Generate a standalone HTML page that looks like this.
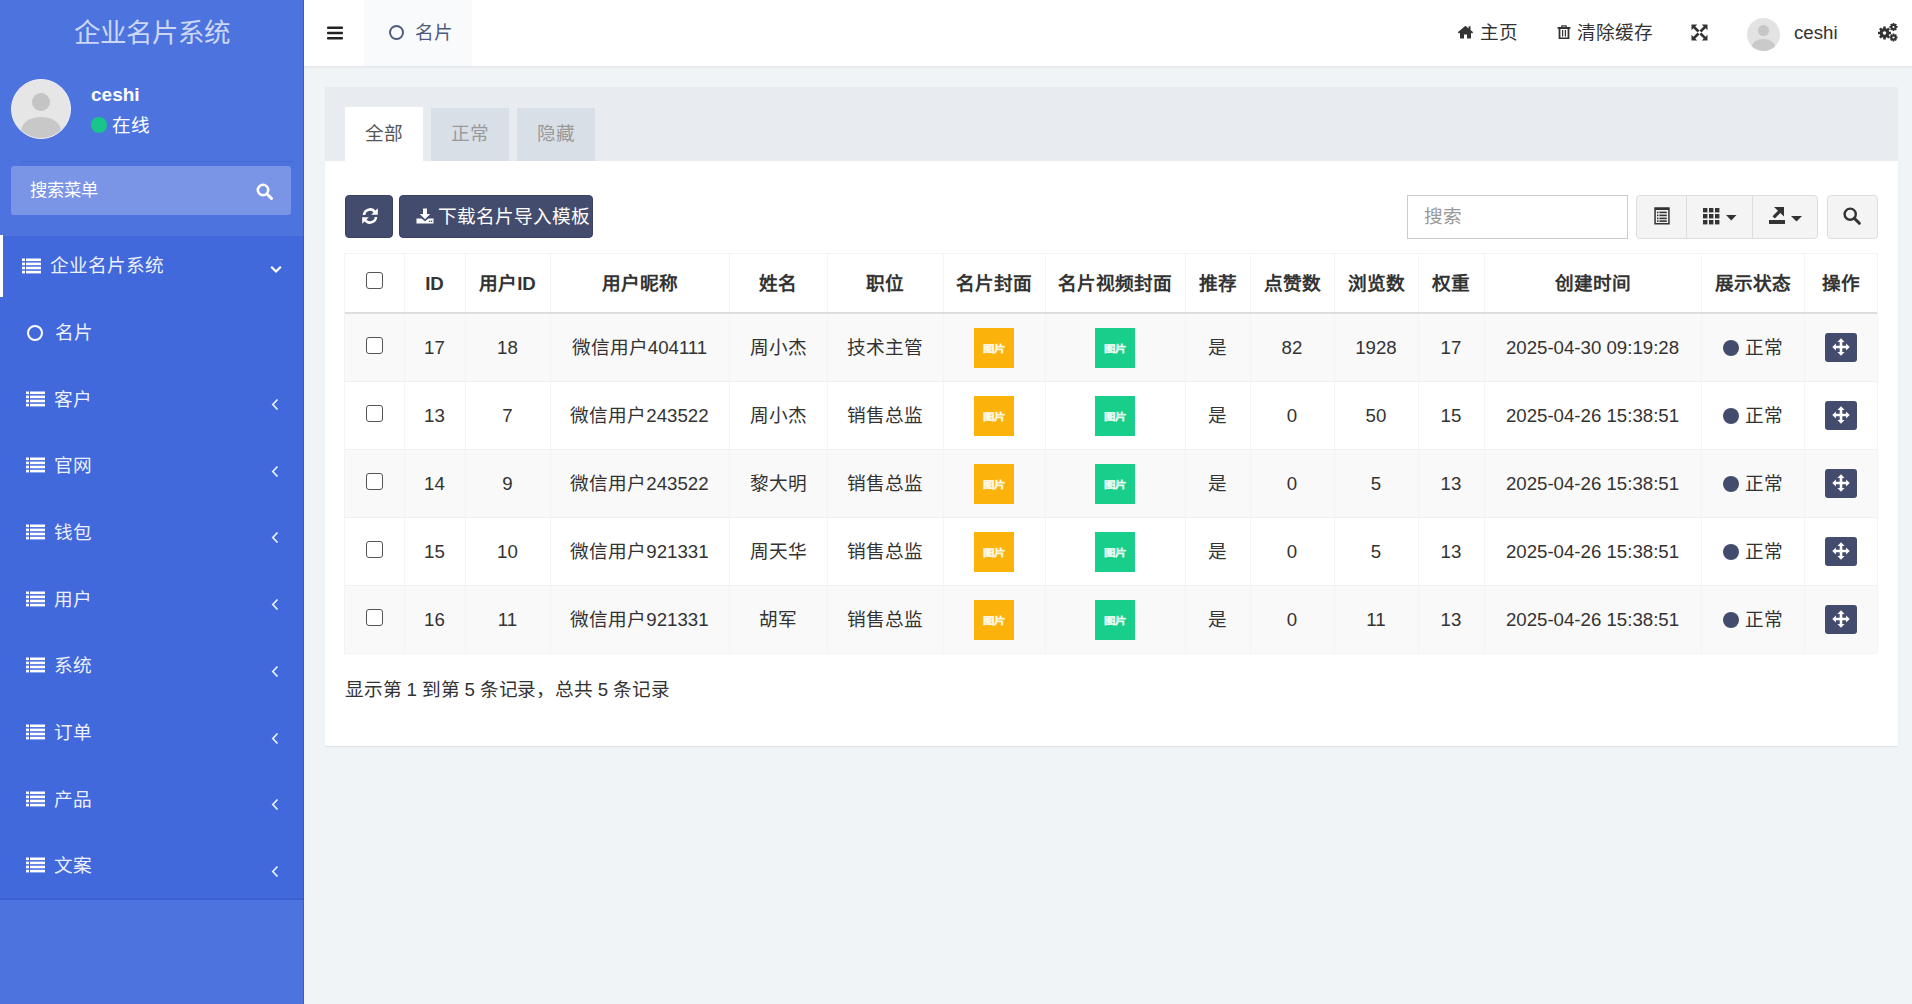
<!DOCTYPE html>
<html lang="zh-CN"><head><meta charset="utf-8">
<style>
*{box-sizing:border-box;margin:0;padding:0}
html,body{width:1912px;height:1004px;overflow:hidden}
body{font-family:"Liberation Sans",sans-serif;font-size:18.67px;color:#333;background:#f1f4f6;position:relative}
.abs{position:absolute}
svg{display:block}
/* sidebar */
#sb{left:0;top:0;width:304px;height:1004px;background:#4d74de}
#logo{left:0;top:0;width:304px;height:66px;text-align:center;line-height:66px;font-size:26.5px;color:rgba(255,255,255,.72)}
#menu{left:0;top:236px;width:304px;height:664px;background:#4269dc}
.mi{position:absolute;left:0;width:304px;height:66px;color:#fff}
.mi .t{position:absolute;left:54px;top:0;line-height:66px;font-size:18.67px}
/* header */
#hd{left:304px;top:0;width:1608px;height:66px;background:#fff}
/* content */
#panel{left:325px;top:87px;width:1573px;height:659px;background:#fff;box-shadow:0 1px 1px rgba(0,0,0,.05)}
#ph{left:0;top:0;width:1573px;height:74px;background:#e8ecf0}
.tab{position:absolute;top:20px;height:54px;width:78px;text-align:center;line-height:54px;font-size:18.67px}
.btn{position:absolute;border-radius:4px}
table{border-collapse:collapse;table-layout:fixed;position:absolute;left:345px;top:253px;width:1532px}
td,th{line-height:26px;padding-top:2px;text-align:center;vertical-align:middle;border-left:1px solid #f4f4f4;font-size:18.67px;color:#333;white-space:nowrap;overflow:hidden}
th{height:60px;font-weight:bold;border-bottom:2px solid #ddd}
td{height:68px;border-bottom:1px solid #f0f0f0}
tbody tr:nth-child(odd) td{background:#f9f9f9}
.cb{display:inline-block;width:17px;height:17px;border:1.3px solid #555;border-radius:3px;background:#fff;vertical-align:middle;position:relative;top:-4px}
.img{display:inline-block;width:40px;height:40px;vertical-align:middle}
.dot{display:inline-block;width:16px;height:16px;border-radius:50%;background:#444c6e;vertical-align:middle;margin-right:6px;position:relative;top:-1px}
.mv{display:inline-flex;align-items:center;justify-content:center;width:32px;height:29px;border-radius:3px;background:#444c6e;vertical-align:middle;position:relative;top:-1px}
</style></head><body>


<!-- SIDEBAR -->
<div id="sb" class="abs"></div>
<div id="logo" class="abs">企业名片系统</div>
<div class="abs" style="left:11px;top:79px;width:60px;height:60px;border-radius:50%;background:#e6e6e6;overflow:hidden;border:1.5px solid #eef">
 <div class="abs" style="left:20px;top:13px;width:18px;height:18px;border-radius:50%;background:#c4c4c4"></div>
 <div class="abs" style="left:9px;top:37px;width:40px;height:28px;border-radius:50%;background:#c8c8c8"></div>
</div>
<div class="abs" style="left:91px;top:83px;font-size:19px;font-weight:bold;color:#fff;line-height:24px">ceshi</div>
<div class="abs" style="left:91px;top:117px;width:16px;height:16px;border-radius:50%;background:#18c58b"></div>
<div class="abs" style="left:112px;top:113px;font-size:18.67px;color:#fff;line-height:26px">在线</div>
<div class="abs" style="left:22px;top:161px;width:271px;height:1px;background:#4568d6"></div>
<div class="abs" style="left:11px;top:166px;width:280px;height:49px;border-radius:3px;background:#7a95e6"></div>
<div class="abs" style="left:30px;top:177px;font-size:17.3px;color:#fff;line-height:26px">搜索菜单</div>
<div class="abs" style="left:256px;top:183px"><svg width="18" height="17" viewBox="0 0 18 17"><circle cx="7" cy="7" r="5.2" stroke="#fff" stroke-width="2.6" fill="none"/><path d="M10.8 10.8 L15.5 15.5" stroke="#fff" stroke-width="3" stroke-linecap="round"/></svg></div>
<div id="menu" class="abs"></div>
<div class="abs" style="left:303px;top:0;width:1px;height:1004px;background:rgba(60,70,120,.45)"></div>
<div class="abs" style="left:0;top:898px;width:304px;height:2px;background:rgba(40,70,180,.25)"></div>
<div class="abs" style="left:0;top:235px;width:3px;height:62px;background:#fff"></div>
<div class="abs" style="left:22px;top:258px"><svg width="19" height="16" viewBox="0 0 19 16"><g fill="#fff"><rect x="0" y="0.5" width="3" height="2.6"/><rect x="0" y="4.6" width="3" height="2.6"/><rect x="0" y="8.7" width="3" height="2.6"/><rect x="0" y="12.8" width="3" height="2.6"/><rect x="4" y="0.5" width="15" height="2.6"/><rect x="4" y="4.6" width="15" height="2.6"/><rect x="4" y="8.7" width="15" height="2.6"/><rect x="4" y="12.8" width="15" height="2.6"/></g></svg></div>
<div class="abs" style="left:50px;top:253.0px;font-size:18.67px;color:rgba(255,255,255,.93);line-height:26px">企业名片系统</div>
<div class="abs" style="left:270px;top:265px"><svg width="12" height="9" viewBox="0 0 12 9"><path d="M1.2 1.8 L6 6.5 L10.8 1.8" stroke="#fff" stroke-width="2.2" fill="none"/></svg></div>
<div class="abs" style="left:27px;top:325px;width:16px;height:16px;border-radius:50%;border:2.6px solid #fff"></div>
<div class="abs" style="left:55px;top:320.0px;font-size:18.67px;color:rgba(255,255,255,.93);line-height:26px">名片</div>
<div class="abs" style="left:26px;top:390.5px"><svg width="19" height="16" viewBox="0 0 19 16"><g fill="#fff"><rect x="0" y="0.5" width="3" height="2.6"/><rect x="0" y="4.6" width="3" height="2.6"/><rect x="0" y="8.7" width="3" height="2.6"/><rect x="0" y="12.8" width="3" height="2.6"/><rect x="4" y="0.5" width="15" height="2.6"/><rect x="4" y="4.6" width="15" height="2.6"/><rect x="4" y="8.7" width="15" height="2.6"/><rect x="4" y="12.8" width="15" height="2.6"/></g></svg></div>
<div class="abs" style="left:54px;top:386.5px;font-size:18.67px;color:rgba(255,255,255,.93);line-height:26px">客户</div>
<div class="abs" style="left:271px;top:398.0px"><svg width="8" height="13" viewBox="0 0 8 13"><path d="M6.5 1.5 L1.8 6.5 L6.5 11.5" stroke="rgba(255,255,255,.9)" stroke-width="1.7" fill="none"/></svg></div>
<div class="abs" style="left:26px;top:457.2px"><svg width="19" height="16" viewBox="0 0 19 16"><g fill="#fff"><rect x="0" y="0.5" width="3" height="2.6"/><rect x="0" y="4.6" width="3" height="2.6"/><rect x="0" y="8.7" width="3" height="2.6"/><rect x="0" y="12.8" width="3" height="2.6"/><rect x="4" y="0.5" width="15" height="2.6"/><rect x="4" y="4.6" width="15" height="2.6"/><rect x="4" y="8.7" width="15" height="2.6"/><rect x="4" y="12.8" width="15" height="2.6"/></g></svg></div>
<div class="abs" style="left:54px;top:453.2px;font-size:18.67px;color:rgba(255,255,255,.93);line-height:26px">官网</div>
<div class="abs" style="left:271px;top:464.7px"><svg width="8" height="13" viewBox="0 0 8 13"><path d="M6.5 1.5 L1.8 6.5 L6.5 11.5" stroke="rgba(255,255,255,.9)" stroke-width="1.7" fill="none"/></svg></div>
<div class="abs" style="left:26px;top:523.9px"><svg width="19" height="16" viewBox="0 0 19 16"><g fill="#fff"><rect x="0" y="0.5" width="3" height="2.6"/><rect x="0" y="4.6" width="3" height="2.6"/><rect x="0" y="8.7" width="3" height="2.6"/><rect x="0" y="12.8" width="3" height="2.6"/><rect x="4" y="0.5" width="15" height="2.6"/><rect x="4" y="4.6" width="15" height="2.6"/><rect x="4" y="8.7" width="15" height="2.6"/><rect x="4" y="12.8" width="15" height="2.6"/></g></svg></div>
<div class="abs" style="left:54px;top:519.9px;font-size:18.67px;color:rgba(255,255,255,.93);line-height:26px">钱包</div>
<div class="abs" style="left:271px;top:531.4px"><svg width="8" height="13" viewBox="0 0 8 13"><path d="M6.5 1.5 L1.8 6.5 L6.5 11.5" stroke="rgba(255,255,255,.9)" stroke-width="1.7" fill="none"/></svg></div>
<div class="abs" style="left:26px;top:590.6px"><svg width="19" height="16" viewBox="0 0 19 16"><g fill="#fff"><rect x="0" y="0.5" width="3" height="2.6"/><rect x="0" y="4.6" width="3" height="2.6"/><rect x="0" y="8.7" width="3" height="2.6"/><rect x="0" y="12.8" width="3" height="2.6"/><rect x="4" y="0.5" width="15" height="2.6"/><rect x="4" y="4.6" width="15" height="2.6"/><rect x="4" y="8.7" width="15" height="2.6"/><rect x="4" y="12.8" width="15" height="2.6"/></g></svg></div>
<div class="abs" style="left:54px;top:586.6px;font-size:18.67px;color:rgba(255,255,255,.93);line-height:26px">用户</div>
<div class="abs" style="left:271px;top:598.1px"><svg width="8" height="13" viewBox="0 0 8 13"><path d="M6.5 1.5 L1.8 6.5 L6.5 11.5" stroke="rgba(255,255,255,.9)" stroke-width="1.7" fill="none"/></svg></div>
<div class="abs" style="left:26px;top:657.3px"><svg width="19" height="16" viewBox="0 0 19 16"><g fill="#fff"><rect x="0" y="0.5" width="3" height="2.6"/><rect x="0" y="4.6" width="3" height="2.6"/><rect x="0" y="8.7" width="3" height="2.6"/><rect x="0" y="12.8" width="3" height="2.6"/><rect x="4" y="0.5" width="15" height="2.6"/><rect x="4" y="4.6" width="15" height="2.6"/><rect x="4" y="8.7" width="15" height="2.6"/><rect x="4" y="12.8" width="15" height="2.6"/></g></svg></div>
<div class="abs" style="left:54px;top:653.3px;font-size:18.67px;color:rgba(255,255,255,.93);line-height:26px">系统</div>
<div class="abs" style="left:271px;top:664.8px"><svg width="8" height="13" viewBox="0 0 8 13"><path d="M6.5 1.5 L1.8 6.5 L6.5 11.5" stroke="rgba(255,255,255,.9)" stroke-width="1.7" fill="none"/></svg></div>
<div class="abs" style="left:26px;top:724.0px"><svg width="19" height="16" viewBox="0 0 19 16"><g fill="#fff"><rect x="0" y="0.5" width="3" height="2.6"/><rect x="0" y="4.6" width="3" height="2.6"/><rect x="0" y="8.7" width="3" height="2.6"/><rect x="0" y="12.8" width="3" height="2.6"/><rect x="4" y="0.5" width="15" height="2.6"/><rect x="4" y="4.6" width="15" height="2.6"/><rect x="4" y="8.7" width="15" height="2.6"/><rect x="4" y="12.8" width="15" height="2.6"/></g></svg></div>
<div class="abs" style="left:54px;top:720.0px;font-size:18.67px;color:rgba(255,255,255,.93);line-height:26px">订单</div>
<div class="abs" style="left:271px;top:731.5px"><svg width="8" height="13" viewBox="0 0 8 13"><path d="M6.5 1.5 L1.8 6.5 L6.5 11.5" stroke="rgba(255,255,255,.9)" stroke-width="1.7" fill="none"/></svg></div>
<div class="abs" style="left:26px;top:790.7px"><svg width="19" height="16" viewBox="0 0 19 16"><g fill="#fff"><rect x="0" y="0.5" width="3" height="2.6"/><rect x="0" y="4.6" width="3" height="2.6"/><rect x="0" y="8.7" width="3" height="2.6"/><rect x="0" y="12.8" width="3" height="2.6"/><rect x="4" y="0.5" width="15" height="2.6"/><rect x="4" y="4.6" width="15" height="2.6"/><rect x="4" y="8.7" width="15" height="2.6"/><rect x="4" y="12.8" width="15" height="2.6"/></g></svg></div>
<div class="abs" style="left:54px;top:786.7px;font-size:18.67px;color:rgba(255,255,255,.93);line-height:26px">产品</div>
<div class="abs" style="left:271px;top:798.2px"><svg width="8" height="13" viewBox="0 0 8 13"><path d="M6.5 1.5 L1.8 6.5 L6.5 11.5" stroke="rgba(255,255,255,.9)" stroke-width="1.7" fill="none"/></svg></div>
<div class="abs" style="left:26px;top:857.4px"><svg width="19" height="16" viewBox="0 0 19 16"><g fill="#fff"><rect x="0" y="0.5" width="3" height="2.6"/><rect x="0" y="4.6" width="3" height="2.6"/><rect x="0" y="8.7" width="3" height="2.6"/><rect x="0" y="12.8" width="3" height="2.6"/><rect x="4" y="0.5" width="15" height="2.6"/><rect x="4" y="4.6" width="15" height="2.6"/><rect x="4" y="8.7" width="15" height="2.6"/><rect x="4" y="12.8" width="15" height="2.6"/></g></svg></div>
<div class="abs" style="left:54px;top:853.4px;font-size:18.67px;color:rgba(255,255,255,.93);line-height:26px">文案</div>
<div class="abs" style="left:271px;top:864.9px"><svg width="8" height="13" viewBox="0 0 8 13"><path d="M6.5 1.5 L1.8 6.5 L6.5 11.5" stroke="rgba(255,255,255,.9)" stroke-width="1.7" fill="none"/></svg></div>


<!-- HEADER -->
<div id="hd" class="abs"></div>
<div class="abs" style="left:364px;top:0;width:108px;height:66px;background:#f9fafb"></div>
<div class="abs" style="left:304px;top:66px;width:1608px;height:3px;background:linear-gradient(#e3e6ea,#f1f4f6)"></div>
<div class="abs" style="left:327px;top:26px"><svg width="16" height="14" viewBox="0 0 16 14"><g fill="#222"><rect x="0" y="0.5" width="16" height="2.4" rx="1"/><rect x="0" y="5.8" width="16" height="2.4" rx="1"/><rect x="0" y="11.1" width="16" height="2.4" rx="1"/></g></svg></div>
<div class="abs" style="left:389px;top:25px;width:15px;height:15px;border-radius:50%;border:2.4px solid #4e5b7e"></div>
<div class="abs" style="left:415px;top:20px;line-height:26px;color:#4e5b7e">名片</div>

<div class="abs" style="left:1457px;top:25px"><svg width="17" height="14" viewBox="0 0 17 14"><path d="M8.5 0.8 L0.8 7.3 L2 8.6 L3 7.8 V13.5 H7 V9.6 H10 V13.5 H14 V7.8 L15 8.6 L16.2 7.3 L13.5 5 V1.2 H11.6 V3.4 Z" fill="#333"/></svg></div>
<div class="abs" style="left:1480px;top:20px;line-height:26px;color:#333">主页</div>
<div class="abs" style="left:1557px;top:24px"><svg width="14" height="16" viewBox="0 0 14 16"><path d="M4.5 1.2 H9.5 L10 3 H13.5 V4.8 H12.4 V15 H1.6 V4.8 H0.5 V3 H4 Z M5.4 2.4 L5.2 3 H8.8 L8.6 2.4 Z M3.4 5 V13.4 H10.6 V5 Z M5 6 H6.2 V12.6 H5 Z M7.8 6 H9 V12.6 H7.8 Z" fill="#333" fill-rule="evenodd"/></svg></div>
<div class="abs" style="left:1577px;top:20px;line-height:26px;color:#333">清除缓存</div>
<div class="abs" style="left:1691px;top:24px"><svg width="17" height="17" viewBox="0 0 17 17"><g fill="#333"><path d="M0.5 0.5 H6.2 L4.3 2.4 L8.5 6.6 L6.6 8.5 L2.4 4.3 L0.5 6.2 Z"/><path d="M16.5 0.5 V6.2 L14.6 4.3 L10.4 8.5 L8.5 6.6 L12.7 2.4 L10.8 0.5 Z"/><path d="M0.5 16.5 V10.8 L2.4 12.7 L6.6 8.5 L8.5 10.4 L4.3 14.6 L6.2 16.5 Z"/><path d="M16.5 16.5 H10.8 L12.7 14.6 L8.5 10.4 L10.4 8.5 L14.6 12.7 L16.5 10.8 Z"/></g></svg></div>
<div class="abs" style="left:1747px;top:18px;width:33px;height:33px;border-radius:50%;background:#e3e3e3;overflow:hidden">
 <div class="abs" style="left:11px;top:7px;width:11px;height:11px;border-radius:50%;background:#c6c6c6"></div>
 <div class="abs" style="left:5px;top:21px;width:23px;height:16px;border-radius:50%;background:#cacaca"></div>
</div>
<div class="abs" style="left:1794px;top:20px;line-height:26px;color:#333">ceshi</div>
<div class="abs" style="left:1877px;top:22px"><svg width="22" height="20" viewBox="0 0 22 20"><g fill="#333"><circle cx="7.5" cy="11" r="4.8"/><g stroke="#333" stroke-width="2.6"><path d="M7.5 4.5 V17.5 M1 11 H14 M2.9 6.4 L12.1 15.6 M12.1 6.4 L2.9 15.6"/></g><circle cx="7.5" cy="11" r="1.8" fill="#fff"/><circle cx="16.5" cy="5" r="3" /><g stroke="#333" stroke-width="1.8"><path d="M16.5 1 V9 M12.5 5 H20.5 M13.7 2.2 L19.3 7.8 M19.3 2.2 L13.7 7.8"/></g><circle cx="16.5" cy="5" r="1.1" fill="#fff"/><circle cx="16.5" cy="15.5" r="3"/><g stroke="#333" stroke-width="1.8"><path d="M16.5 11.5 V19.5 M12.5 15.5 H20.5 M13.7 12.7 L19.3 18.3 M19.3 12.7 L13.7 18.3"/></g><circle cx="16.5" cy="15.5" r="1.1" fill="#fff"/></g></svg></div>


<!-- PANEL -->
<div class="abs" style="left:325px;top:87px;width:1573px;height:659px;background:#fff;box-shadow:0 1px 1px rgba(0,0,0,.06)"></div>
<div class="abs" style="left:325px;top:87px;width:1573px;height:74px;background:#e8ecf0"></div>
<div class="abs tabx" style="left:345px;top:107px;width:78px;height:54px;background:#fff;color:#555;text-align:center;line-height:54px">全部</div>
<div class="abs tabx" style="left:431px;top:108px;width:78px;height:53px;background:#d9dfe6;color:#999;text-align:center;line-height:52px">正常</div>
<div class="abs tabx" style="left:517px;top:108px;width:78px;height:53px;background:#d9dfe6;color:#999;text-align:center;line-height:52px">隐藏</div>

<div class="abs" style="left:345px;top:195px;width:48px;height:43px;background:#444c6e;border:1px solid #3a4163;border-radius:4px"></div>
<div class="abs" style="left:361px;top:207px"><svg width="18" height="18" viewBox="0 0 18 18"><g fill="none" stroke="#fff" stroke-width="2.6"><path d="M3 8 A6 6 0 0 1 14 5.2"/><path d="M15 10 A6 6 0 0 1 4 12.8"/></g><path d="M16.8 1.2 V7.8 H10.2 Z" fill="#fff"/><path d="M1.2 16.8 V10.2 H7.8 Z" fill="#fff"/></svg></div>
<div class="abs" style="left:399px;top:195px;width:194px;height:43px;background:#444c6e;border:1px solid #3a4163;border-radius:4px"></div>
<div class="abs" style="left:416px;top:208px"><svg width="18" height="16" viewBox="0 0 18 16"><path d="M7 0.5 H11 V6 H14.2 L9 11.2 L3.8 6 H7 Z" fill="#fff"/><path d="M0.5 10.5 H5.5 L9 13.2 L12.5 10.5 H17.5 V15.5 H0.5 Z" fill="#fff"/><rect x="13" y="12.6" width="1.3" height="1.3" fill="#444c6e"/><rect x="15" y="12.6" width="1.3" height="1.3" fill="#444c6e"/></svg></div>
<div class="abs" style="left:438px;top:204px;line-height:26px;color:#fff">下载名片导入模板</div>

<div class="abs" style="left:1407px;top:195px;width:221px;height:44px;border:1px solid #ccc;background:#fff"></div>
<div class="abs" style="left:1424px;top:204px;line-height:26px;color:#999">搜索</div>
<div class="abs" style="left:1636px;top:195px;width:182px;height:44px;border:1px solid #ddd;border-radius:4px;background:#f4f4f4"></div>
<div class="abs" style="left:1686px;top:196px;width:1px;height:42px;background:#ddd"></div>
<div class="abs" style="left:1752px;top:196px;width:1px;height:42px;background:#ddd"></div>
<div class="abs" style="left:1654px;top:207px"><svg width="16" height="18" viewBox="0 0 16 18"><path d="M0.3 0.3 H15.7 V17.5 H0.3 Z M1.8 3 V16 H14.2 V3 Z" fill="#333" fill-rule="evenodd"/><g fill="#333"><rect x="3" y="4.6" width="1.5" height="1.6"/><rect x="3" y="7.6" width="1.5" height="1.6"/><rect x="3" y="10.6" width="1.5" height="1.6"/><rect x="3" y="13.3" width="1.5" height="1.6"/><rect x="5.4" y="4.6" width="7.4" height="1.6"/><rect x="5.4" y="7.6" width="7.4" height="1.6"/><rect x="5.4" y="10.6" width="7.4" height="1.6"/><rect x="5.4" y="13.3" width="7.4" height="1.6"/></g></svg></div>
<div class="abs" style="left:1703px;top:208px"><svg width="35" height="17" viewBox="0 0 35 17"><g fill="#333"><rect x="0" y="0" width="4.4" height="4.4"/><rect x="6" y="0" width="4.4" height="4.4"/><rect x="12" y="0" width="4.4" height="4.4"/><rect x="0" y="6" width="4.4" height="4.4"/><rect x="6" y="6" width="4.4" height="4.4"/><rect x="12" y="6" width="4.4" height="4.4"/><rect x="0" y="12" width="4.4" height="4.4"/><rect x="6" y="12" width="4.4" height="4.4"/><rect x="12" y="12" width="4.4" height="4.4"/><path d="M23 7 H33.5 L28.25 12.5 Z"/></g></svg></div>
<div class="abs" style="left:1769px;top:207px"><svg width="35" height="18" viewBox="0 0 35 18"><g fill="#333"><path d="M5 0 H15 V9.5 Z"/><path d="M3.5 9.2 L9.5 3.2 L11.8 5.5 L5.8 11.5 Z"/><rect x="0" y="13" width="16" height="4"/><path d="M22 9 H33 L27.5 14.5 Z"/></g></svg></div>
<div class="abs" style="left:1827px;top:195px;width:51px;height:44px;border:1px solid #ddd;border-radius:4px;background:#f4f4f4"></div>
<div class="abs" style="left:1843px;top:207px"><svg width="18" height="18" viewBox="0 0 18 18"><circle cx="7.2" cy="7.2" r="5.6" stroke="#333" stroke-width="2.4" fill="none"/><path d="M11.3 11.3 L16.3 16.3" stroke="#333" stroke-width="3" stroke-linecap="round"/></svg></div>

<table>
<colgroup><col style="width:59px"><col style="width:61px"><col style="width:85px"><col style="width:179px"><col style="width:98px"><col style="width:116px"><col style="width:102px"><col style="width:140px"><col style="width:65px"><col style="width:84px"><col style="width:84px"><col style="width:66px"><col style="width:217px"><col style="width:103px"><col style="width:73px"></colgroup>
<thead><tr><th style="border-left:none"><span class="cb"></span></th><th>ID</th><th>用户ID</th><th>用户昵称</th><th>姓名</th><th>职位</th><th>名片封面</th><th>名片视频封面</th><th>推荐</th><th>点赞数</th><th>浏览数</th><th>权重</th><th>创建时间</th><th>展示状态</th><th>操作</th></tr></thead>
<tbody>
<tr><td style="border-left:none"><span class="cb"></span></td><td>17</td><td>18</td><td>微信用户404111</td><td>周小杰</td><td>技术主管</td><td><span class="img" style="background:#fbb30b"><svg width="40" height="40" viewBox="0 0 40 40"><text x="20" y="24.2" text-anchor="middle" font-family="Liberation Sans" font-size="11.5" font-weight="bold" fill="rgba(255,255,255,.8)" stroke="rgba(255,255,255,.6)" stroke-width="0.7" transform="translate(0,4.6) scale(1,0.8)" letter-spacing="-0.5">图片</text></svg></span></td><td><span class="img" style="background:#17cf8b"><svg width="40" height="40" viewBox="0 0 40 40"><text x="20" y="24.2" text-anchor="middle" font-family="Liberation Sans" font-size="11.5" font-weight="bold" fill="rgba(255,255,255,.8)" stroke="rgba(255,255,255,.6)" stroke-width="0.7" transform="translate(0,4.6) scale(1,0.8)" letter-spacing="-0.5">图片</text></svg></span></td><td>是</td><td>82</td><td>1928</td><td>17</td><td>2025-04-30 09:19:28</td><td><span class="dot"></span>正常</td><td><span class="mv"><svg width="18" height="18" viewBox="0 0 18 18"><g fill="#fff"><path d="M9 0.3 L12.6 3.9 H10.3 V7.7 H14.1 V5.4 L17.7 9 L14.1 12.6 V10.3 H10.3 V14.1 H12.6 L9 17.7 L5.4 14.1 H7.7 V10.3 H3.9 V12.6 L0.3 9 L3.9 5.4 V7.7 H7.7 V3.9 H5.4 Z"/></g></svg></span></td></tr>
<tr><td style="border-left:none"><span class="cb"></span></td><td>13</td><td>7</td><td>微信用户243522</td><td>周小杰</td><td>销售总监</td><td><span class="img" style="background:#fbb30b"><svg width="40" height="40" viewBox="0 0 40 40"><text x="20" y="24.2" text-anchor="middle" font-family="Liberation Sans" font-size="11.5" font-weight="bold" fill="rgba(255,255,255,.8)" stroke="rgba(255,255,255,.6)" stroke-width="0.7" transform="translate(0,4.6) scale(1,0.8)" letter-spacing="-0.5">图片</text></svg></span></td><td><span class="img" style="background:#17cf8b"><svg width="40" height="40" viewBox="0 0 40 40"><text x="20" y="24.2" text-anchor="middle" font-family="Liberation Sans" font-size="11.5" font-weight="bold" fill="rgba(255,255,255,.8)" stroke="rgba(255,255,255,.6)" stroke-width="0.7" transform="translate(0,4.6) scale(1,0.8)" letter-spacing="-0.5">图片</text></svg></span></td><td>是</td><td>0</td><td>50</td><td>15</td><td>2025-04-26 15:38:51</td><td><span class="dot"></span>正常</td><td><span class="mv"><svg width="18" height="18" viewBox="0 0 18 18"><g fill="#fff"><path d="M9 0.3 L12.6 3.9 H10.3 V7.7 H14.1 V5.4 L17.7 9 L14.1 12.6 V10.3 H10.3 V14.1 H12.6 L9 17.7 L5.4 14.1 H7.7 V10.3 H3.9 V12.6 L0.3 9 L3.9 5.4 V7.7 H7.7 V3.9 H5.4 Z"/></g></svg></span></td></tr>
<tr><td style="border-left:none"><span class="cb"></span></td><td>14</td><td>9</td><td>微信用户243522</td><td>黎大明</td><td>销售总监</td><td><span class="img" style="background:#fbb30b"><svg width="40" height="40" viewBox="0 0 40 40"><text x="20" y="24.2" text-anchor="middle" font-family="Liberation Sans" font-size="11.5" font-weight="bold" fill="rgba(255,255,255,.8)" stroke="rgba(255,255,255,.6)" stroke-width="0.7" transform="translate(0,4.6) scale(1,0.8)" letter-spacing="-0.5">图片</text></svg></span></td><td><span class="img" style="background:#17cf8b"><svg width="40" height="40" viewBox="0 0 40 40"><text x="20" y="24.2" text-anchor="middle" font-family="Liberation Sans" font-size="11.5" font-weight="bold" fill="rgba(255,255,255,.8)" stroke="rgba(255,255,255,.6)" stroke-width="0.7" transform="translate(0,4.6) scale(1,0.8)" letter-spacing="-0.5">图片</text></svg></span></td><td>是</td><td>0</td><td>5</td><td>13</td><td>2025-04-26 15:38:51</td><td><span class="dot"></span>正常</td><td><span class="mv"><svg width="18" height="18" viewBox="0 0 18 18"><g fill="#fff"><path d="M9 0.3 L12.6 3.9 H10.3 V7.7 H14.1 V5.4 L17.7 9 L14.1 12.6 V10.3 H10.3 V14.1 H12.6 L9 17.7 L5.4 14.1 H7.7 V10.3 H3.9 V12.6 L0.3 9 L3.9 5.4 V7.7 H7.7 V3.9 H5.4 Z"/></g></svg></span></td></tr>
<tr><td style="border-left:none"><span class="cb"></span></td><td>15</td><td>10</td><td>微信用户921331</td><td>周天华</td><td>销售总监</td><td><span class="img" style="background:#fbb30b"><svg width="40" height="40" viewBox="0 0 40 40"><text x="20" y="24.2" text-anchor="middle" font-family="Liberation Sans" font-size="11.5" font-weight="bold" fill="rgba(255,255,255,.8)" stroke="rgba(255,255,255,.6)" stroke-width="0.7" transform="translate(0,4.6) scale(1,0.8)" letter-spacing="-0.5">图片</text></svg></span></td><td><span class="img" style="background:#17cf8b"><svg width="40" height="40" viewBox="0 0 40 40"><text x="20" y="24.2" text-anchor="middle" font-family="Liberation Sans" font-size="11.5" font-weight="bold" fill="rgba(255,255,255,.8)" stroke="rgba(255,255,255,.6)" stroke-width="0.7" transform="translate(0,4.6) scale(1,0.8)" letter-spacing="-0.5">图片</text></svg></span></td><td>是</td><td>0</td><td>5</td><td>13</td><td>2025-04-26 15:38:51</td><td><span class="dot"></span>正常</td><td><span class="mv"><svg width="18" height="18" viewBox="0 0 18 18"><g fill="#fff"><path d="M9 0.3 L12.6 3.9 H10.3 V7.7 H14.1 V5.4 L17.7 9 L14.1 12.6 V10.3 H10.3 V14.1 H12.6 L9 17.7 L5.4 14.1 H7.7 V10.3 H3.9 V12.6 L0.3 9 L3.9 5.4 V7.7 H7.7 V3.9 H5.4 Z"/></g></svg></span></td></tr>
<tr><td style="border-left:none"><span class="cb"></span></td><td>16</td><td>11</td><td>微信用户921331</td><td>胡军</td><td>销售总监</td><td><span class="img" style="background:#fbb30b"><svg width="40" height="40" viewBox="0 0 40 40"><text x="20" y="24.2" text-anchor="middle" font-family="Liberation Sans" font-size="11.5" font-weight="bold" fill="rgba(255,255,255,.8)" stroke="rgba(255,255,255,.6)" stroke-width="0.7" transform="translate(0,4.6) scale(1,0.8)" letter-spacing="-0.5">图片</text></svg></span></td><td><span class="img" style="background:#17cf8b"><svg width="40" height="40" viewBox="0 0 40 40"><text x="20" y="24.2" text-anchor="middle" font-family="Liberation Sans" font-size="11.5" font-weight="bold" fill="rgba(255,255,255,.8)" stroke="rgba(255,255,255,.6)" stroke-width="0.7" transform="translate(0,4.6) scale(1,0.8)" letter-spacing="-0.5">图片</text></svg></span></td><td>是</td><td>0</td><td>11</td><td>13</td><td>2025-04-26 15:38:51</td><td><span class="dot"></span>正常</td><td><span class="mv"><svg width="18" height="18" viewBox="0 0 18 18"><g fill="#fff"><path d="M9 0.3 L12.6 3.9 H10.3 V7.7 H14.1 V5.4 L17.7 9 L14.1 12.6 V10.3 H10.3 V14.1 H12.6 L9 17.7 L5.4 14.1 H7.7 V10.3 H3.9 V12.6 L0.3 9 L3.9 5.4 V7.7 H7.7 V3.9 H5.4 Z"/></g></svg></span></td></tr>

</tbody></table>
<div class="abs" style="left:344px;top:253px;width:1534px;height:401px;border:1px solid #f3f3f3"></div>
<div class="abs" style="left:345px;top:677px;line-height:26px;color:#333;letter-spacing:-0.16px">显示第 1 到第 5 条记录，总共 5 条记录</div>

</body></html>
